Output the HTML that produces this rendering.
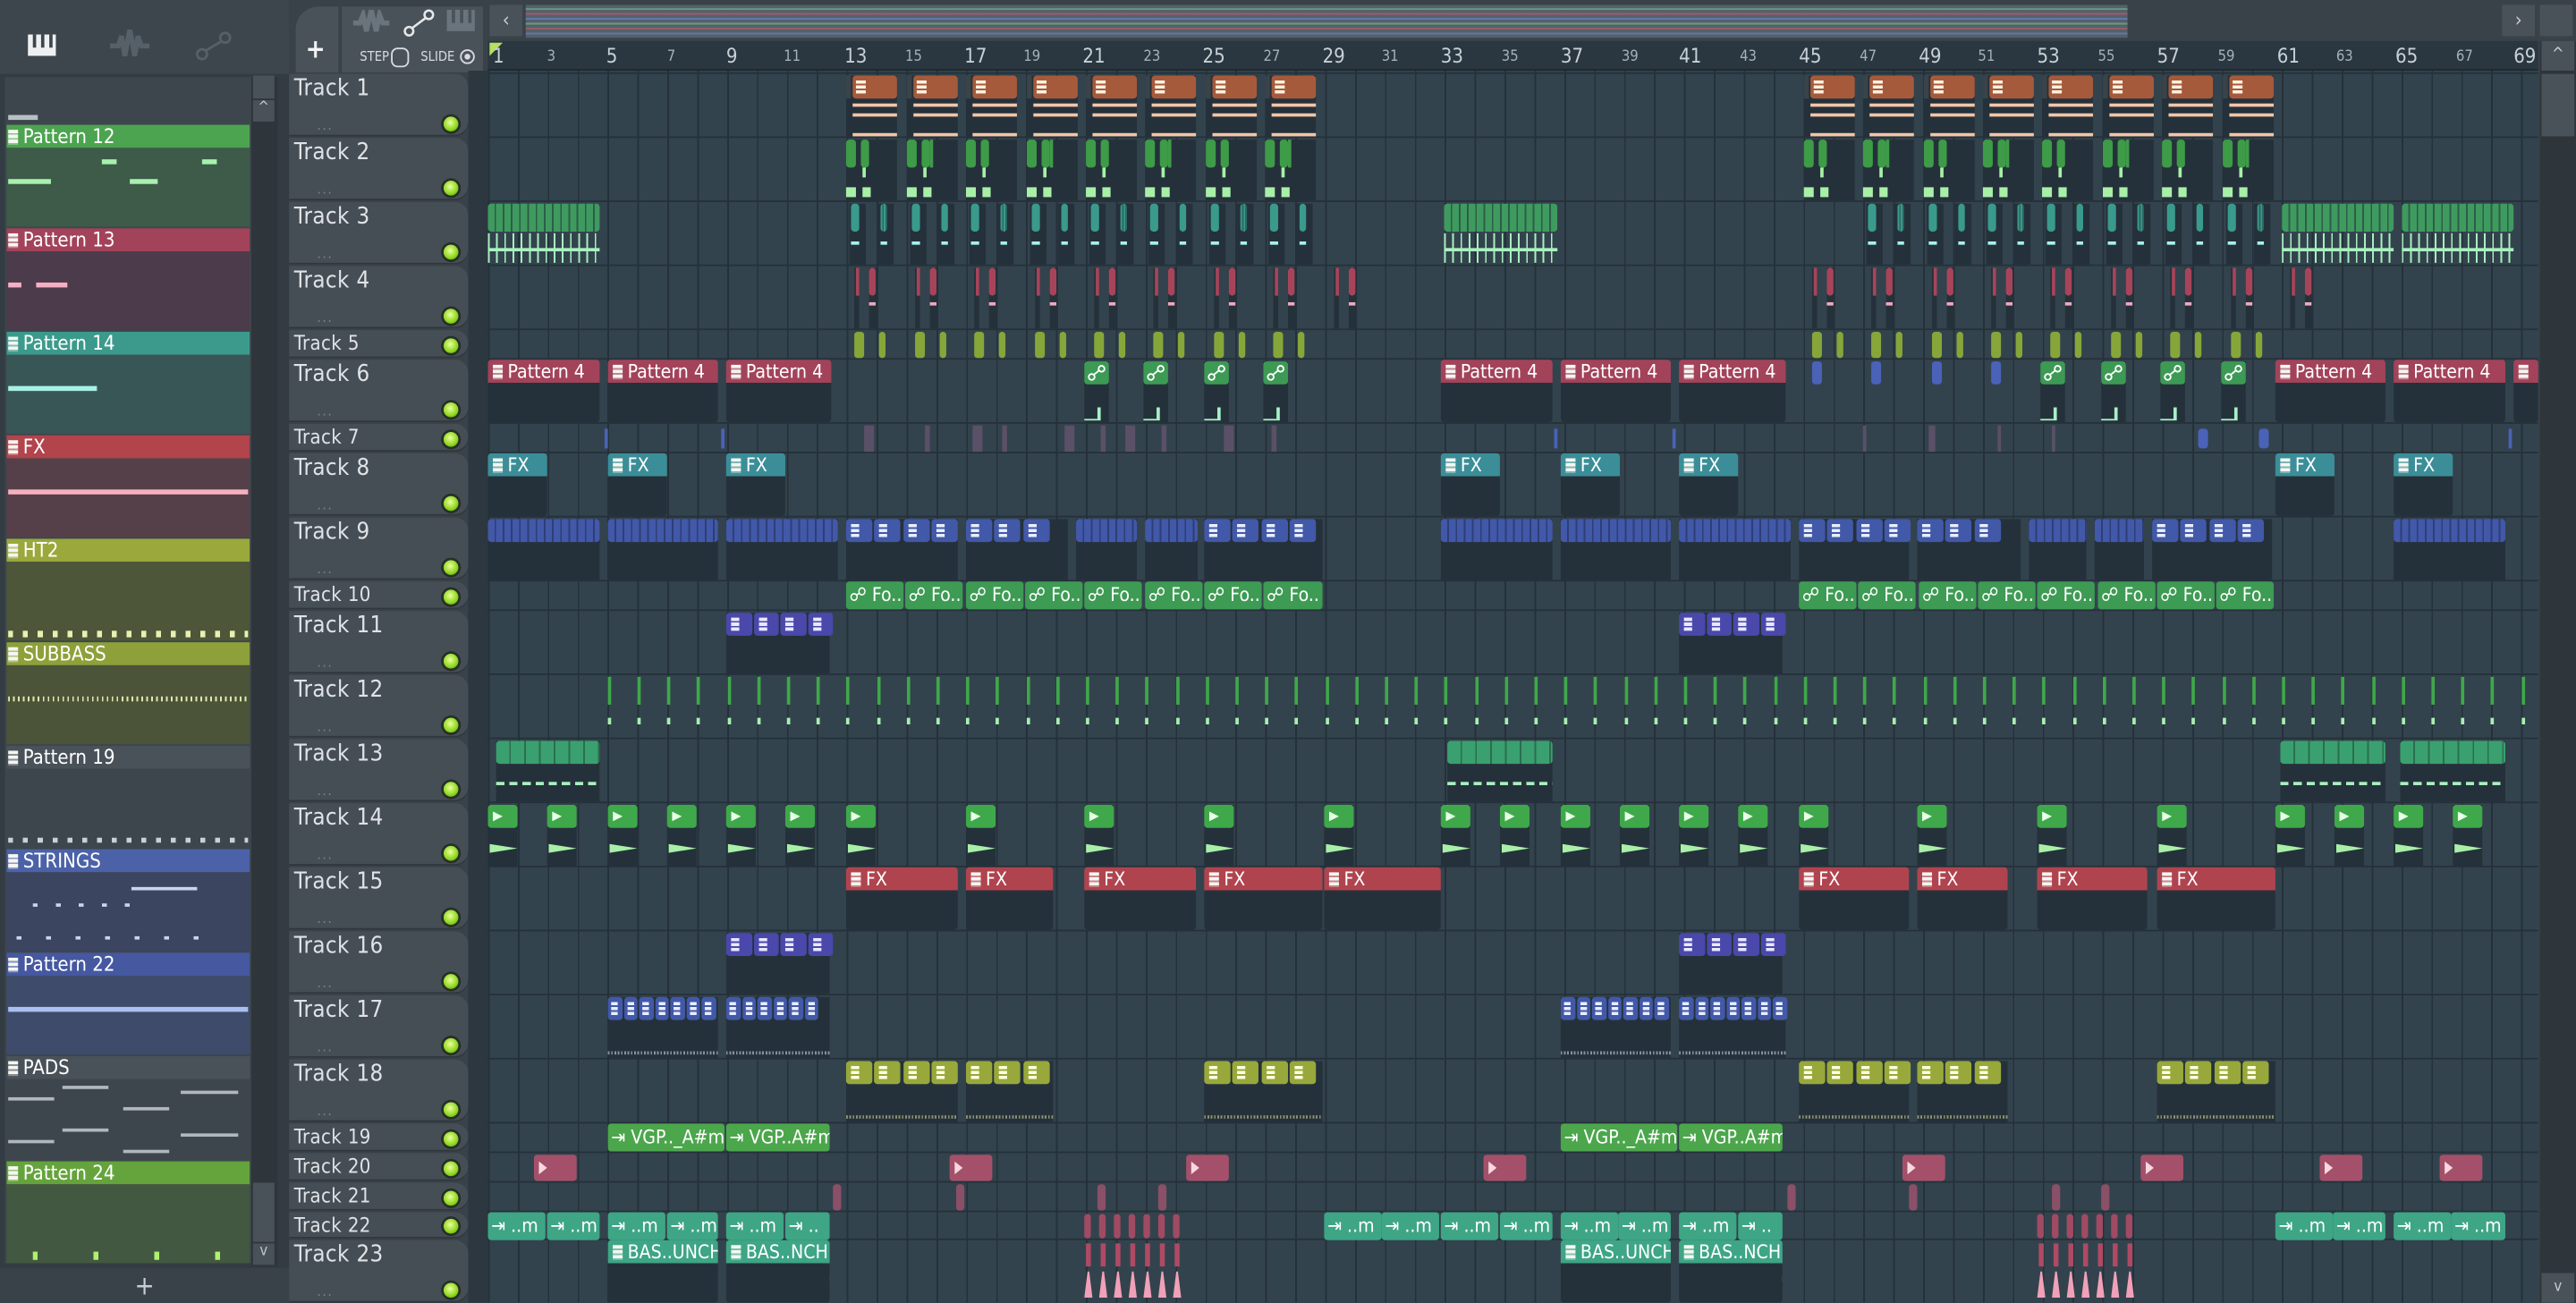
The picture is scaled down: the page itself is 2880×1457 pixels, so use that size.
<!DOCTYPE html>
<html><head><meta charset="utf-8">
<style>
html,body{margin:0;padding:0;background:#3a4249;width:2880px;height:1456px;overflow:hidden}
#s{position:absolute;left:0;top:0;width:1568px;height:793px;transform:scale(1.83673);transform-origin:0 0;font-family:"Liberation Sans Narrow","DejaVu Sans Condensed","Liberation Sans",sans-serif;color:#e4e8ea;overflow:hidden;background:#3a4249}
.a{position:absolute}
#grid{position:absolute;left:297px;top:43px;width:1248px;height:750px;background-color:#33434d;background-image:repeating-linear-gradient(90deg,#25313a 0 1px,transparent 1px 18.2px)}
.rs{position:absolute;left:297px;width:1248px;height:1px;background:#25313a}
.th{position:absolute;left:176px;width:109px;background:#464e55;border-radius:0 8px 8px 0;box-shadow:inset 0 -1px 0 #30373d}
.th b{position:absolute;left:3px;top:1px;font-weight:normal;font-size:14px;color:#dfe3e6;letter-spacing:.2px}
.th.sm b{font-size:12px;top:1px}
.th u{position:absolute;right:6px;bottom:3px;width:9px;height:9px;border-radius:50%;background:radial-gradient(circle at 45% 40%,#e8ff9a,#8ed61c 60%,#4d8a10);box-shadow:0 0 0 1.5px #263027}
.th i{position:absolute;left:17px;bottom:2px;font-style:normal;font-size:8px;color:#7d868d;letter-spacing:1px}
.c{position:absolute;height:38px;border-radius:2px;overflow:hidden;white-space:nowrap;font-size:11.5px;line-height:14px;color:#fff;background:linear-gradient(var(--c) 0 14px,#25313a 14px);box-sizing:border-box;padding-left:2px}
.c.s{height:17px;line-height:16px;background:var(--c)}
.P{--c:#a2435a}.F{--c:#3b8e98}.R{--c:#b0444e}.G{--c:#3e9b54}.T{--c:#3ea585}.V{--c:#4ca64c}
.c i,.pt i{display:inline-block;width:6px;height:9px;margin:0 3px -1px 1px;background:repeating-linear-gradient(#f4f6f0 0 2px,rgba(255,255,255,.35) 2px 3px)}
.rn{position:absolute;top:27px;font-size:12px;color:#c8d0d6}
.rn.m{font-size:9px;top:30px;color:#a7b0b7}
.pt{position:absolute;left:4px;width:148px;height:14px;font-size:12px;line-height:14px;color:#fff;white-space:nowrap}
.pb{position:absolute;left:4px;width:148px}
</style></head><body><div id="s">

<!-- left toolbar -->
<div class="a" style="left:0;top:0;width:176px;height:45px;background:#3e464d"></div>
<div class="a" style="left:17px;top:21px;width:17px;height:13px;background:#eef0f2"></div>
<div class="a" style="left:20px;top:21px;width:2px;height:8px;background:#3e464d"></div>
<div class="a" style="left:25px;top:21px;width:2px;height:8px;background:#3e464d"></div>
<div class="a" style="left:30px;top:21px;width:2px;height:8px;background:#3e464d"></div>
<svg class="a" style="left:66px;top:18px" width="26" height="20"><path d="M1 10h5l2-6 2 12 3-16 3 16 2-12 2 6h5" stroke="#566069" stroke-width="3" fill="none"/></svg>
<svg class="a" style="left:118px;top:18px" width="24" height="20"><circle cx="5" cy="15" r="3" stroke="#566069" stroke-width="1.5" fill="none"/><circle cx="19" cy="5" r="3" stroke="#566069" stroke-width="1.5" fill="none"/><path d="M7 13l10-6" stroke="#566069" stroke-width="1.5"/></svg>

<!-- pattern panel -->
<div class="a" style="left:0;top:45px;width:176px;height:748px;background:#343c43"></div>
<div class="a" style="left:3px;top:47px;width:150px;height:722px;background:#3d464d"></div>
<div class="a" style="left:5px;top:70px;width:18px;height:3px;background:#b8c0c6"></div>
<div class="pt" style="top:76px;background:#4da450"><i></i>Pattern 12</div>
<div class="pb" style="top:90px;height:48px;background:#3d5b48"></div>
<div class="a" style="left:5px;top:109px;width:26px;height:3px;background:#a8f0ae"></div>
<div class="a" style="left:79px;top:109px;width:17px;height:3px;background:#a8f0ae"></div>
<div class="a" style="left:62px;top:97px;width:9px;height:3px;background:#a8f0ae"></div>
<div class="a" style="left:123px;top:97px;width:9px;height:3px;background:#a8f0ae"></div>
<div class="pt" style="top:139px;background:#a2435a"><i></i>Pattern 13</div>
<div class="pb" style="top:153px;height:48px;background:#4c3b4a"></div>
<div class="a" style="left:5px;top:172px;width:8px;height:3px;background:#f6b0c6"></div>
<div class="a" style="left:22px;top:172px;width:19px;height:3px;background:#f6b0c6"></div>
<div class="pt" style="top:202px;background:#3c9a8c"><i></i>Pattern 14</div>
<div class="pb" style="top:216px;height:48px;background:#395657"></div>
<div class="a" style="left:5px;top:235px;width:54px;height:3px;background:#a8f0e6"></div>
<div class="pt" style="top:265px;background:#b2444c"><i></i>FX</div>
<div class="pb" style="top:279px;height:48px;background:#55404a"></div>
<div class="a" style="left:5px;top:298px;width:146px;height:3px;background:#f6b0c0"></div>
<div class="pt" style="top:328px;background:#9aa83c"><i></i>HT2</div>
<div class="pb" style="top:342px;height:48px;background:#4d5639"></div>
<div class="a" style="left:5px;top:384px;width:146px;height:4px;background:repeating-linear-gradient(90deg,#e8f0b0 0 3px,transparent 3px 9px)"></div>
<div class="pt" style="top:391px;background:#8ea03a"><i></i>SUBBASS</div>
<div class="pb" style="top:405px;height:48px;background:#4b5438"></div>
<div class="a" style="left:5px;top:424px;width:146px;height:3px;background:repeating-linear-gradient(90deg,#e0e8b0 0 1px,transparent 1px 3px)"></div>
<div class="pt" style="top:454px;background:#4a5259"><i></i>Pattern 19</div>
<div class="pb" style="top:468px;height:48px;background:#3e464d"></div>
<div class="a" style="left:5px;top:510px;width:146px;height:3px;background:repeating-linear-gradient(90deg,#c8d0d8 0 3px,transparent 3px 9px)"></div>
<div class="pt" style="top:517px;background:#4c62a8"><i></i>STRINGS</div>
<div class="pb" style="top:531px;height:48px;background:#3b4560"></div>
<div class="a" style="left:80px;top:540px;width:40px;height:2px;background:#c8d4f0"></div>
<div class="a" style="left:20px;top:550px;width:60px;height:2px;background:repeating-linear-gradient(90deg,#c8d4f0 0 3px,transparent 3px 14px)"></div>
<div class="a" style="left:10px;top:570px;width:120px;height:2px;background:repeating-linear-gradient(90deg,#c8d4f0 0 3px,transparent 3px 18px)"></div>
<div class="pt" style="top:580px;background:#4558a0"><i></i>Pattern 22</div>
<div class="pb" style="top:594px;height:48px;background:#3e4b6a"></div>
<div class="a" style="left:5px;top:613px;width:146px;height:3px;background:#aac0f0"></div>
<div class="pt" style="top:643px;background:#4a5259"><i></i>PADS</div>
<div class="pb" style="top:657px;height:49px;background:#3e464d"></div>
<div class="a" style="left:5px;top:668px;width:28px;height:2px;background:#b0b8be"></div>
<div class="a" style="left:38px;top:661px;width:28px;height:2px;background:#b0b8be"></div>
<div class="a" style="left:75px;top:674px;width:28px;height:2px;background:#b0b8be"></div>
<div class="a" style="left:110px;top:664px;width:35px;height:2px;background:#b0b8be"></div>
<div class="a" style="left:5px;top:694px;width:28px;height:2px;background:#b0b8be"></div>
<div class="a" style="left:38px;top:687px;width:28px;height:2px;background:#b0b8be"></div>
<div class="a" style="left:75px;top:700px;width:28px;height:2px;background:#b0b8be"></div>
<div class="a" style="left:110px;top:690px;width:35px;height:2px;background:#b0b8be"></div>
<div class="pt" style="top:707px;background:#65a43c"><i></i>Pattern 24</div>
<div class="pb" style="top:721px;height:48px;background:#435840"></div>
<div class="a" style="left:20px;top:762px;width:130px;height:5px;background:repeating-linear-gradient(90deg,#b0f070 0 3px,transparent 3px 37px)"></div>
<!-- scrollbar -->
<div class="a" style="left:153px;top:47px;width:16px;height:724px;background:#2e353b"></div>
<div class="a" style="left:154px;top:46px;width:13px;height:14px;background:#4a5259"></div>
<div class="a" style="left:154px;top:61px;width:13px;height:13px;background:#4a5259;font-size:9px;text-align:center;color:#c0c6ca">^</div>
<div class="a" style="left:154px;top:720px;width:13px;height:36px;background:#4a5259"></div>
<div class="a" style="left:154px;top:757px;width:13px;height:13px;background:#4a5259;font-size:9px;text-align:center;color:#c0c6ca">v</div>
<div class="a" style="left:0;top:772px;width:176px;height:21px;background:#3a4249;text-align:center;font-size:16px;line-height:21px;color:#c8ced2">+</div>

<!-- playlist top -->
<div class="a" style="left:176px;top:0;width:1392px;height:25px;background:#3a4249"></div>
<div class="a" style="left:176px;top:25px;width:121px;height:20px;background:#3a4249"></div>
<div class="a" style="left:180px;top:4px;width:26px;height:40px;background:#4a5259;border-radius:14px 0 0 0"></div>
<div class="a" style="left:186px;top:20px;font-size:16px;color:#f0f2f4;font-weight:bold">+</div>
<div class="a" style="left:208px;top:4px;width:86px;height:40px;background:#4a5259"></div>
<svg class="a" style="left:214px;top:6px" width="24" height="16"><path d="M1 8h4l2-5 2 10 3-13 3 13 2-10 2 5h4" stroke="#6a747c" stroke-width="3" fill="none"/></svg>
<svg class="a" style="left:244px;top:4px" width="22" height="20"><circle cx="5" cy="15" r="2.6" stroke="#e4e8ea" stroke-width="1.4" fill="none"/><circle cx="17" cy="5" r="2.6" stroke="#e4e8ea" stroke-width="1.4" fill="none"/><path d="M7 13l8-6" stroke="#e4e8ea" stroke-width="1.4"/></svg>
<div class="a" style="left:272px;top:6px;width:17px;height:13px;background:#6a747c"></div>
<div class="a" style="left:275px;top:6px;width:2px;height:8px;background:#4a5259"></div><div class="a" style="left:280px;top:6px;width:2px;height:8px;background:#4a5259"></div><div class="a" style="left:285px;top:6px;width:2px;height:8px;background:#4a5259"></div>
<div class="a" style="left:219px;top:30px;font-size:8px;color:#d8dce0">STEP</div>
<div class="a" style="left:238px;top:29px;width:9px;height:10px;border:1px solid #d8dce0;border-radius:4px"></div>
<div class="a" style="left:256px;top:30px;font-size:8px;color:#d8dce0">SLIDE</div>
<div class="a" style="left:280px;top:30px;width:7px;height:7px;border:1px solid #d8dce0;border-radius:50%;background:radial-gradient(#d8dce0 0 1.5px,transparent 2px)"></div>
<div class="a" style="left:298px;top:3px;width:20px;height:19px;background:#4a5259;font-size:12px;text-align:center;line-height:19px;color:#c8ced2">‹</div>
<div class="a" style="left:320px;top:3px;width:975px;height:20px;background:#56606a"></div>
<div class="a" style="left:320px;top:5px;width:975px;height:16px;background:repeating-linear-gradient(#6ad08c 0 1px,transparent 1px 3px,#d0586c 3px 4px,transparent 4px 6px,#6a8ce0 6px 7px,transparent 7px 9px);opacity:.55"></div>
<div class="a" style="left:1523px;top:3px;width:20px;height:19px;background:#4a5259;font-size:12px;text-align:center;line-height:19px;color:#c8ced2">›</div>
<div class="a" style="left:1546px;top:3px;width:20px;height:19px;background:#4a5259"></div>
<!-- ruler -->
<div class="a" style="left:297px;top:25px;width:1248px;height:18px;background:#2a3740"></div>
<div class="a" style="left:297px;top:42px;width:1248px;height:1px;background:#1e282f"></div>
<div class="a" style="left:298px;top:26px;width:0;height:0;border-left:8px solid #b6e060;border-bottom:8px solid transparent"></div>
<div class="rn" style="left:300px">1</div><div class="rn m" style="left:333px">3</div><div class="rn" style="left:369px">5</div><div class="rn m" style="left:406px">7</div><div class="rn" style="left:442px">9</div><div class="rn m" style="left:477px">11</div><div class="rn" style="left:514px">13</div><div class="rn m" style="left:551px">15</div><div class="rn" style="left:587px">17</div><div class="rn m" style="left:623px">19</div><div class="rn" style="left:659px">21</div><div class="rn m" style="left:696px">23</div><div class="rn" style="left:732px">25</div><div class="rn m" style="left:769px">27</div><div class="rn" style="left:805px">29</div><div class="rn m" style="left:841px">31</div><div class="rn" style="left:877px">33</div><div class="rn m" style="left:914px">35</div><div class="rn" style="left:950px">37</div><div class="rn m" style="left:987px">39</div><div class="rn" style="left:1022px">41</div><div class="rn m" style="left:1059px">43</div><div class="rn" style="left:1095px">45</div><div class="rn m" style="left:1132px">47</div><div class="rn" style="left:1168px">49</div><div class="rn m" style="left:1204px">51</div><div class="rn" style="left:1240px">53</div><div class="rn m" style="left:1277px">55</div><div class="rn" style="left:1313px">57</div><div class="rn m" style="left:1350px">59</div><div class="rn" style="left:1386px">61</div><div class="rn m" style="left:1422px">63</div><div class="rn" style="left:1458px">65</div><div class="rn m" style="left:1495px">67</div><div class="rn" style="left:1530px">69</div>
<!-- right scrollbar -->
<div class="a" style="left:1546px;top:25px;width:22px;height:768px;background:#2e353b"></div>
<div class="a" style="left:1547px;top:25px;width:20px;height:18px;background:#4a5259;font-size:10px;text-align:center;color:#c8ced2;line-height:18px">^</div>
<div class="a" style="left:1547px;top:45px;width:20px;height:38px;background:#4a5259"></div>
<div class="a" style="left:1547px;top:775px;width:20px;height:18px;background:#4a5259;font-size:9px;text-align:center;color:#c8ced2;line-height:18px">v</div>

<!-- grid -->
<div class="a" style="left:285px;top:43px;width:12px;height:750px;background:#2c373f"></div>
<div id="grid"></div>
<div id="rows"></div>

<!-- track headers -->
<div class="th" style="top:45px;height:38px"><b>Track 1</b><i>...</i><u></u></div>
<div class="th" style="top:84px;height:38px"><b>Track 2</b><i>...</i><u></u></div>
<div class="th" style="top:123px;height:38px"><b>Track 3</b><i>...</i><u></u></div>
<div class="th" style="top:162px;height:38px"><b>Track 4</b><i>...</i><u></u></div>
<div class="th sm" style="top:201px;height:17px"><b>Track 5</b><u></u></div>
<div class="th" style="top:219px;height:38px"><b>Track 6</b><i>...</i><u></u></div>
<div class="th sm" style="top:258px;height:17px"><b>Track 7</b><u></u></div>
<div class="th" style="top:276px;height:38px"><b>Track 8</b><i>...</i><u></u></div>
<div class="th" style="top:315px;height:38px"><b>Track 9</b><i>...</i><u></u></div>
<div class="th sm" style="top:354px;height:17px"><b>Track 10</b><u></u></div>
<div class="th" style="top:372px;height:38px"><b>Track 11</b><i>...</i><u></u></div>
<div class="th" style="top:411px;height:38px"><b>Track 12</b><i>...</i><u></u></div>
<div class="th" style="top:450px;height:38px"><b>Track 13</b><i>...</i><u></u></div>
<div class="th" style="top:489px;height:38px"><b>Track 14</b><i>...</i><u></u></div>
<div class="th" style="top:528px;height:38px"><b>Track 15</b><i>...</i><u></u></div>
<div class="th" style="top:567px;height:38px"><b>Track 16</b><i>...</i><u></u></div>
<div class="th" style="top:606px;height:38px"><b>Track 17</b><i>...</i><u></u></div>
<div class="th" style="top:645px;height:38px"><b>Track 18</b><i>...</i><u></u></div>
<div class="th sm" style="top:684px;height:17px"><b>Track 19</b><u></u></div>
<div class="th sm" style="top:702px;height:17px"><b>Track 20</b><u></u></div>
<div class="th sm" style="top:720px;height:17px"><b>Track 21</b><u></u></div>
<div class="th sm" style="top:738px;height:16px"><b>Track 22</b><u></u></div>
<div class="th" style="top:755px;height:38px"><b>Track 23</b><i>...</i><u></u></div>

<div id="clips"></div>

<!-- text clips -->
<div class="c P" style="left:297px;top:219px;width:68px"><i></i>Pattern 4</div>
<div class="c P" style="left:370px;top:219px;width:67px"><i></i>Pattern 4</div>
<div class="c P" style="left:442px;top:219px;width:64px"><i></i>Pattern 4</div>
<div class="c P" style="left:877px;top:219px;width:68px"><i></i>Pattern 4</div>
<div class="c P" style="left:950px;top:219px;width:67px"><i></i>Pattern 4</div>
<div class="c P" style="left:1022px;top:219px;width:65px"><i></i>Pattern 4</div>
<div class="c P" style="left:1385px;top:219px;width:67px"><i></i>Pattern 4</div>
<div class="c P" style="left:1457px;top:219px;width:68px"><i></i>Pattern 4</div>
<div class="c P" style="left:1530px;top:219px;width:15px"><i></i></div>

<div class="c F" style="left:297px;top:276px;width:36px"><i></i>FX</div>
<div class="c F" style="left:370px;top:276px;width:36px"><i></i>FX</div>
<div class="c F" style="left:442px;top:276px;width:36px"><i></i>FX</div>
<div class="c F" style="left:877px;top:276px;width:36px"><i></i>FX</div>
<div class="c F" style="left:950px;top:276px;width:36px"><i></i>FX</div>
<div class="c F" style="left:1022px;top:276px;width:36px"><i></i>FX</div>
<div class="c F" style="left:1385px;top:276px;width:36px"><i></i>FX</div>
<div class="c F" style="left:1457px;top:276px;width:36px"><i></i>FX</div>

<div class="c s G" style="left:515px;top:354px;width:35px">☍ Fo..</div>
<div class="c s G" style="left:551px;top:354px;width:35px">☍ Fo..</div>
<div class="c s G" style="left:588px;top:354px;width:35px">☍ Fo..</div>
<div class="c s G" style="left:624px;top:354px;width:35px">☍ Fo..</div>
<div class="c s G" style="left:660px;top:354px;width:35px">☍ Fo..</div>
<div class="c s G" style="left:697px;top:354px;width:35px">☍ Fo..</div>
<div class="c s G" style="left:733px;top:354px;width:35px">☍ Fo..</div>
<div class="c s G" style="left:769px;top:354px;width:36px">☍ Fo..</div>
<div class="c s G" style="left:1095px;top:354px;width:35px">☍ Fo..</div>
<div class="c s G" style="left:1131px;top:354px;width:35px">☍ Fo..</div>
<div class="c s G" style="left:1168px;top:354px;width:35px">☍ Fo..</div>
<div class="c s G" style="left:1204px;top:354px;width:35px">☍ Fo..</div>
<div class="c s G" style="left:1240px;top:354px;width:35px">☍ Fo..</div>
<div class="c s G" style="left:1277px;top:354px;width:35px">☍ Fo..</div>
<div class="c s G" style="left:1313px;top:354px;width:35px">☍ Fo..</div>
<div class="c s G" style="left:1349px;top:354px;width:35px">☍ Fo..</div>

<div class="c R" style="left:515px;top:528px;width:68px"><i></i>FX</div>
<div class="c R" style="left:588px;top:528px;width:53px"><i></i>FX</div>
<div class="c R" style="left:660px;top:528px;width:68px"><i></i>FX</div>
<div class="c R" style="left:733px;top:528px;width:72px"><i></i>FX</div>
<div class="c R" style="left:806px;top:528px;width:71px"><i></i>FX</div>
<div class="c R" style="left:1095px;top:528px;width:67px"><i></i>FX</div>
<div class="c R" style="left:1167px;top:528px;width:55px"><i></i>FX</div>
<div class="c R" style="left:1240px;top:528px;width:67px"><i></i>FX</div>
<div class="c R" style="left:1313px;top:528px;width:72px"><i></i>FX</div>

<div class="c s V" style="left:370px;top:684px;width:71px">⇥ VGP.._A#m</div>
<div class="c s V" style="left:442px;top:684px;width:63px">⇥ VGP..A#m</div>
<div class="c s V" style="left:950px;top:684px;width:71px">⇥ VGP.._A#m</div>
<div class="c s V" style="left:1022px;top:684px;width:63px">⇥ VGP..A#m</div>

<div class="c s T" style="left:297px;top:738px;width:35px">⇥ ..m</div>
<div class="c s T" style="left:333px;top:738px;width:32px">⇥ ..m</div>
<div class="c s T" style="left:370px;top:738px;width:35px">⇥ ..m</div>
<div class="c s T" style="left:406px;top:738px;width:31px">⇥ ..m</div>
<div class="c s T" style="left:442px;top:738px;width:35px">⇥ ..m</div>
<div class="c s T" style="left:478px;top:738px;width:27px">⇥ ..</div>
<div class="c s T" style="left:806px;top:738px;width:35px">⇥ ..m</div>
<div class="c s T" style="left:841px;top:738px;width:35px">⇥ ..m</div>
<div class="c s T" style="left:877px;top:738px;width:35px">⇥ ..m</div>
<div class="c s T" style="left:913px;top:738px;width:32px">⇥ ..m</div>
<div class="c s T" style="left:950px;top:738px;width:35px">⇥ ..m</div>
<div class="c s T" style="left:985px;top:738px;width:32px">⇥ ..m</div>
<div class="c s T" style="left:1022px;top:738px;width:35px">⇥ ..m</div>
<div class="c s T" style="left:1058px;top:738px;width:27px">⇥ ..</div>
<div class="c s T" style="left:1385px;top:738px;width:35px">⇥ ..m</div>
<div class="c s T" style="left:1420px;top:738px;width:32px">⇥ ..m</div>
<div class="c s T" style="left:1457px;top:738px;width:35px">⇥ ..m</div>
<div class="c s T" style="left:1492px;top:738px;width:33px">⇥ ..m</div>

<div class="c T" style="left:370px;top:755px;width:67px"><i></i>BAS..UNCH</div>
<div class="c T" style="left:442px;top:755px;width:63px"><i></i>BAS..NCH</div>
<div class="c T" style="left:950px;top:755px;width:67px"><i></i>BAS..UNCH</div>
<div class="c T" style="left:1022px;top:755px;width:63px"><i></i>BAS..NCH</div>

<script>
(function(){
var X=function(b){return 297+(b-1)*18.2};
var rows=[[45,39],[84,39],[123,39],[162,39],[201,18],[219,39],[258,18],[276,39],[315,39],[354,18],[372,39],[411,39],[450,39],[489,39],[528,39],[567,39],[606,39],[645,39],[684,18],[702,18],[720,18],[738,17],[755,38]];
var R=document.getElementById('rows'),C=document.getElementById('clips'),h='';
rows.forEach(function(r){h+='<div class="rs" style="top:'+(r[0]-1)+'px"></div>'});
R.innerHTML=h;h='';
function d(x,y,w,ht,bg,ex){h+='<div class="a" style="left:'+x.toFixed(1)+'px;top:'+y+'px;width:'+w+'px;height:'+ht+'px;background:'+bg+';'+(ex||'')+'"></div>'}
function bod(x,y,w,ht){d(x,y,w,ht,'#25313a')}
[[297,68],[370,67],[442,64],[877,68],[950,67],[1022,65],[1385,67],[1457,68]].forEach(function(c){
 d(c[0]+4,240,c[1]-6,2,'repeating-linear-gradient(90deg,#f0a8c0 0 4px,transparent 4px 12px)');
 d(c[0]+8,246,c[1]-10,2,'repeating-linear-gradient(90deg,#f0a8c0 0 4px,transparent 4px 14px)');
 d(c[0]+6,236,c[1]-10,2,'repeating-linear-gradient(90deg,#f0a8c0 0 4px,transparent 4px 16px)');
 d(c[0]+20,253,4,2,'#f0a8c0');
 d(c[0]+2,298,33,2,'#a8eef0');
});
[[515,68],[588,53],[660,68],[733,72],[806,71],[1095,67],[1167,55],[1240,67],[1313,72]].forEach(function(c){d(c[0]+2,553,36,2,'#f0b0b0')});
[13,15,17,19,21,23,25,27,45,47,49,51,53,55,57,59].forEach(function(b){var x=X(b);
 bod(x,46,31,37);d(x,46,3,14,'#3a434a');d(x+4,46,27,14,'#a65a3c','border-radius:2px');
 d(x+6,49,6,8,'repeating-linear-gradient(#fff2e0 0 2px,transparent 2px 3px)');
 d(x+4,63,27,2,'#f2c6a8');d(x+4,69,27,2,'#f2c6a8');d(x+4,81,27,2,'#f2c6a8');});
[13,15,17,19,21,23,25,27,45,47,49,51,53,55,57,59].forEach(function(b,i){var x=X(b);
 bod(x,85,31,37);
 d(x,85,6,17,'#3e9b48','border-radius:2px');d(x+9,85,5,17,'#3e9b48','border-radius:2px');if(i%2)d(x+14,85,2,17,'#3e9b48');
 d(x+10,102,2,6,'#a8f0a8');d(x,114,6,6,'#a8f0a8');d(x+10,114,5,6,'#a8f0a8');});
[[1,4.75],[33,36.75],[61,64.75],[65,68.75]].forEach(function(s){var x=X(s[0]),w=X(s[1])-x;
 d(x,124,w,17,'repeating-linear-gradient(90deg,#3f9a60 0 4px,#2c5e46 4px 5px)','border-radius:2px');
 d(x,142,w,18,'repeating-linear-gradient(90deg,#a8f0c0 0 1px,transparent 1px 5px)');
 d(x,151,w,2,'#a8f0c0');});
[13,15,17,19,21,23,25,27,47,49,51,53,55,57,59].forEach(function(b,i){var x=X(b);
 bod(x+2,124,10,37);bod(x+19,124,10,37);
 d(x+3,124,5,17,'#3a9a8c','border-radius:2px');d(x+21,124,4,17,i%2?'#3a9a8c':'repeating-linear-gradient(90deg,#3a9a8c 0 1px,#2a6a62 1px 2px)','border-radius:2px');
 d(x+3,147,5,2,'#a8f0f0');d(x+21,147,4,2,'#a8f0f0');});
[13,15,17,19,21,23,25,27,29,45,47,49,51,53,55,57,59,61].forEach(function(b,i){var x=X(b)-3;
 bod(x+8,163,3,37);bod(x+17,163,5,37);
 d(x+9,163,2,17,'#a8445a');d(x+17,163,4,17,'#a8445a','border-radius:2px');
 d(x+17,184,4,2,'#f0a8c0');});
[13,15,17,19,21,23,25,27,45,47,49,51,53,55,57,59].forEach(function(b){var x=X(b);
 d(x+5,202,6,16,'#86a63a','border-radius:2px');d(x+20,202,4,16,'#86a63a','border-radius:2px');});
[21,23,25,27,45,47,49,51,53,55,57,59].forEach(function(b){var x=X(b)-1;
 var blue=(b>=45&&b<=51);
 if(blue){d(x+6,220,6,14,'#4a62b8','border-radius:2px');}
 else{bod(x,220,15,37);d(x,220,15,14,'#3d9a55','border-radius:2px');
 h+='<svg class="a" style="left:'+(x+2)+'px;top:222px" width="11" height="10"><circle cx="2.5" cy="7.5" r="1.8" stroke="#fff" fill="none"/><circle cx="8.5" cy="2.5" r="1.8" stroke="#fff" fill="none"/><path d="M4 6l3-2.5" stroke="#fff"/></svg>';
 d(x,255,8,1,'#a8f0c8');d(x+8,248,2,8,'#a8f0c8');}});
[13.6,15.6,17.2,18.2,20.3,21.5,22.3,23.5,25.6,27.2].forEach(function(b,i){d(X(b),259,i%2?3:6,16,'#5a5068')});
d(X(47),259,2,16,'#5a5068');d(X(49.2),259,4,16,'#5a5068');d(X(51.5),259,2,16,'#5a5068');d(X(53.3),259,2,16,'#5a5068');
d(1338,261,6,12,'#4a62b8','border-radius:2px');d(1375,261,6,12,'#4a62b8','border-radius:2px');
d(368,261,2,12,'#4a62b8');d(439,261,2,12,'#4a62b8');d(946,261,2,12,'#4a62b8');d(1018,261,2,12,'#4a62b8');d(1527,261,2,12,'#4a62b8');
[[297,365],[370,437],[442,510],[655,692],[697,729],[877,945],[950,1017],[1022,1090],[1235,1270],[1275,1305],[1457,1525]].forEach(function(s){
 bod(s[0],316,s[1]-s[0],37);d(s[0],316,s[1]-s[0],14,'repeating-linear-gradient(90deg,#4258a8 0 4px,#2f3e78 4px 5px)','border-radius:2px');});
[[515,583],[588,650],[733,805],[1095,1162],[1167,1230],[1310,1383]].forEach(function(s){
 bod(s[0],316,s[1]-s[0],37);for(var x=s[0];x+16<=s[1]+1;x+=17.3){d(x,316,16,14,'#4258a8','border-radius:2px');d(x+3,319,5,8,'repeating-linear-gradient(#e8eeff 0 2px,transparent 2px 3px)');}});
[[442,372],[1022,372],[442,567],[1022,567]].forEach(function(s){bod(s[0],s[1]+1,63,37);
 for(var i=0;i<4;i++){d(s[0]+i*16.5,s[1]+1,15.5,14,'#4a48aa','border-radius:2px');d(s[0]+i*16.5+3,s[1]+4,5,8,'repeating-linear-gradient(#e8e8ff 0 2px,transparent 2px 3px)');}});
for(var b=5;b<=69;b++){var x=X(b);d(x,412,2,17,'#3fa84a');d(x,437,2,4,'#a8f0b0');}
[[302,365],[881,945],[1388,1452],[1461,1525]].forEach(function(s){bod(s[0],451,s[1]-s[0],37);
 d(s[0],451,s[1]-s[0],14,'repeating-linear-gradient(90deg,#3aa070 0 8px,#2c6e50 8px 9px)','border-radius:2px');
 d(s[0],476,s[1]-s[0],2,'repeating-linear-gradient(90deg,#a8f0c0 0 5px,transparent 5px 8px)');});
[297,333,370,406,442,478,515,588,660,733,806,877,913,950,986,1022,1058,1095,1167,1240,1313,1385,1421,1457,1493].forEach(function(x){
 bod(x,490,18,37);d(x,490,18,14,'#3fa84a','border-radius:2px');d(x+3,494,6,6,'#e8ffe8','clip-path:polygon(0 0,100% 50%,0 100%)');
 d(x+1,512,17,9,'#a8f0a8','clip-path:polygon(0 20%,100% 50%,0 80%,0 100%,0 0)');});
[[370,437],[442,505],[950,1017],[1022,1087]].forEach(function(s){bod(s[0],607,s[1]-s[0],37);
 for(var x=s[0];x+8<=s[1];x+=9.5){d(x,607,8.5,14,'#4258a8','border-radius:2px');d(x+2,610,4,8,'repeating-linear-gradient(#e8eeff 0 2px,transparent 2px 3px)');}
 d(s[0],640,s[1]-s[0],2,'repeating-linear-gradient(90deg,#8890a0 0 1px,transparent 1px 2px)');});
[[515,583],[588,641],[733,805],[1095,1162],[1167,1222],[1313,1385]].forEach(function(s){bod(s[0],646,s[1]-s[0],37);
 for(var x=s[0];x+16<=s[1]+1;x+=17.3){d(x,646,16,14,'#98a83a','border-radius:2px');d(x+3,649,5,8,'repeating-linear-gradient(#fbffe0 0 2px,transparent 2px 3px)');}
 d(s[0],679,s[1]-s[0],2,'repeating-linear-gradient(90deg,#8a9070 0 1px,transparent 1px 2px)');});
[325,578,722,903,1158,1303,1412,1485].forEach(function(x){d(x,703,26,16,'#a4506a','border-radius:2px');d(x+3,707,5,8,'#f8d8e0','clip-path:polygon(0 0,100% 50%,0 100%)');});
[507,582,668,705,1088,1162,1249,1279].forEach(function(x){d(x,721,5,16,'#8a5068','border-radius:2px')});
[[660,720],[1240,1300]].forEach(function(s){for(var x=s[0];x<s[1];x+=9){d(x,739,4,15,'#a04a64','border-radius:2px');d(x+1,757,3,14,'#b04a64');d(x,774,5,16,'#f0a0b8','clip-path:polygon(40% 0,60% 0,100% 100%,0 100%)');}});
[[370,437],[442,505],[950,1017],[1022,1085]].forEach(function(s){
 d(s[0]+2,775,8,3,'#a8f0e0');d(s[0]+12,783,8,3,'#a8f0e0');d(s[0]+28,771,8,3,'#a8f0e0');d(s[0]+40,787,8,3,'#a8f0e0');d(s[0]+55,777,8,3,'#a8f0e0');});
[1042,1062,1070,1078].forEach(function(x){d(x,757,6,14,'#3ea585','border-radius:2px')});
C.innerHTML=h;
})();
</script>
</div></body></html>
